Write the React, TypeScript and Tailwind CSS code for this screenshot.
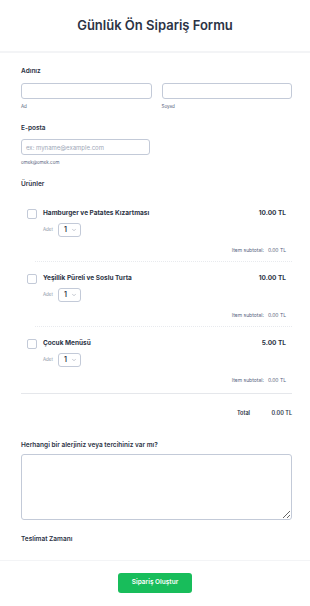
import { ChevronDown } from "lucide-react";

const products = [
  { name: "Hamburger ve Patates Kızartması", price: "10.00 TL" },
  { name: "Yeşillik Püreli ve Soslu Turta", price: "10.00 TL" },
  { name: "Çocuk Menüsü", price: "5.00 TL" },
];

const Product = ({ name, price, last }: { name: string; price: string; last: boolean }) => {
  return (
    <div className="flex flex-col">
      <div className="flex items-center h-[12px] pl-[6px] pr-[6px]">
        <span className="w-[10px] h-[10px] border border-[#c3cad8] rounded-[2px] bg-white"></span>
        <span className="ml-[6px] text-[6.5px] font-bold text-[#2c3345]">{name}</span>
        <span className="ml-auto text-[6.5px] font-bold text-[#2c3345]">{price}</span>
      </div>
      <div className="flex items-center mt-[3px] ml-[22px]">
        <span className="text-[4.5px] text-[#8d94a5]">Adet</span>
        <div className="ml-[5px] w-[23px] h-[14px] border border-[#c3cad8] rounded-[3px] flex items-center pl-[5px] gap-[4px]">
          <span className="text-[7px] font-semibold text-[#2c3345]">1</span>
          <ChevronDown size={6} strokeWidth={2} className="text-[#8d94a5]" />
        </div>
      </div>
      <div className="flex justify-end items-center mt-[10px] h-[8px] pr-[6px] text-[5px] text-[#57647e]">
        <span>Item subtotal:</span>
        <span className="ml-[4px]">0.00 TL</span>
      </div>
      {last ? (
        <div className="mt-[8px] h-[1px] bg-[#e5e7eb]"></div>
      ) : (
        <div className="mt-[6px] ml-[14px] border-t border-dotted border-[#e8eaee]"></div>
      )}
    </div>
  );
};

const App = () => {
  return (
    <div className="w-[310px] h-[606px] bg-white flex flex-col font-['Inter',sans-serif] text-[#2c3345]">
      <div className="h-[51px] flex items-center justify-center">
        <h1 className="text-[13px] font-semibold text-[#2c3345]">Günlük Ön Sipariş Formu</h1>
      </div>
      <div className="h-[2px] bg-[#f3f4f6]"></div>

      <div className="flex flex-col pl-[21px] pr-[18px] pt-[14px]">
        <label className="h-[10px] flex items-center text-[6.5px] font-semibold">Adınız</label>
        <div className="flex gap-[10px] mt-[6px]">
          <div className="flex-1 flex flex-col">
            <div className="h-[16px] border border-[#c3cad8] rounded-[3px]"></div>
            <span className="mt-[4px] h-[8px] flex items-center text-[4.5px] text-[#57647e]">Ad</span>
          </div>
          <div className="flex-1 flex flex-col">
            <div className="h-[16px] border border-[#c3cad8] rounded-[3px]"></div>
            <span className="mt-[4px] h-[8px] flex items-center text-[4.5px] text-[#57647e]">Soyad</span>
          </div>
        </div>

        <label className="mt-[13px] h-[10px] flex items-center text-[6.5px] font-semibold">E-posta</label>
        <div className="mt-[5px] w-[129px] h-[16px] border border-[#c3cad8] rounded-[3px] flex items-center px-[4px] text-[6px] text-[#a0a8b8]">
          ex: myname@example.com
        </div>
        <span className="mt-[4px] h-[8px] flex items-center text-[4.5px] text-[#57647e]">omek@omek.com</span>

        <label className="mt-[13px] h-[10px] flex items-center text-[6.5px] font-semibold">Ürünler</label>

        <div className="flex flex-col mt-[18px]">
          {products.map((p, i) => (
            <div key={p.name} className={i > 0 ? "mt-[11px]" : ""}>
              <Product name={p.name} price={p.price} last={i === products.length - 1} />
            </div>
          ))}
        </div>

        <div className="flex justify-end items-center mt-[14px] h-[10px] text-[5.5px] font-semibold">
          <span>Total</span>
          <span className="ml-[21px] w-[21px] text-right">0.00 TL</span>
        </div>

        <label className="mt-[23px] h-[10px] flex items-center text-[6.5px] font-semibold">
          Herhangi bir alerjiniz veya tercihiniz var mı?
        </label>
        <textarea className="mt-[3px] h-[66px] border border-[#c3cad8] rounded-[3px] resize-y"></textarea>

        <label className="mt-[15px] h-[10px] flex items-center text-[6.5px] font-semibold">Teslimat Zamanı</label>
      </div>

      <div className="mt-[15px] h-[1px] bg-[#f3f4f6]"></div>
      <div className="flex justify-center pt-[12px]">
        <button className="w-[74px] h-[20px] rounded-[3px] bg-[#18bd5b] text-white text-[6.5px] font-semibold">
          Sipariş Oluştur
        </button>
      </div>
    </div>
  );
};

export default App;
